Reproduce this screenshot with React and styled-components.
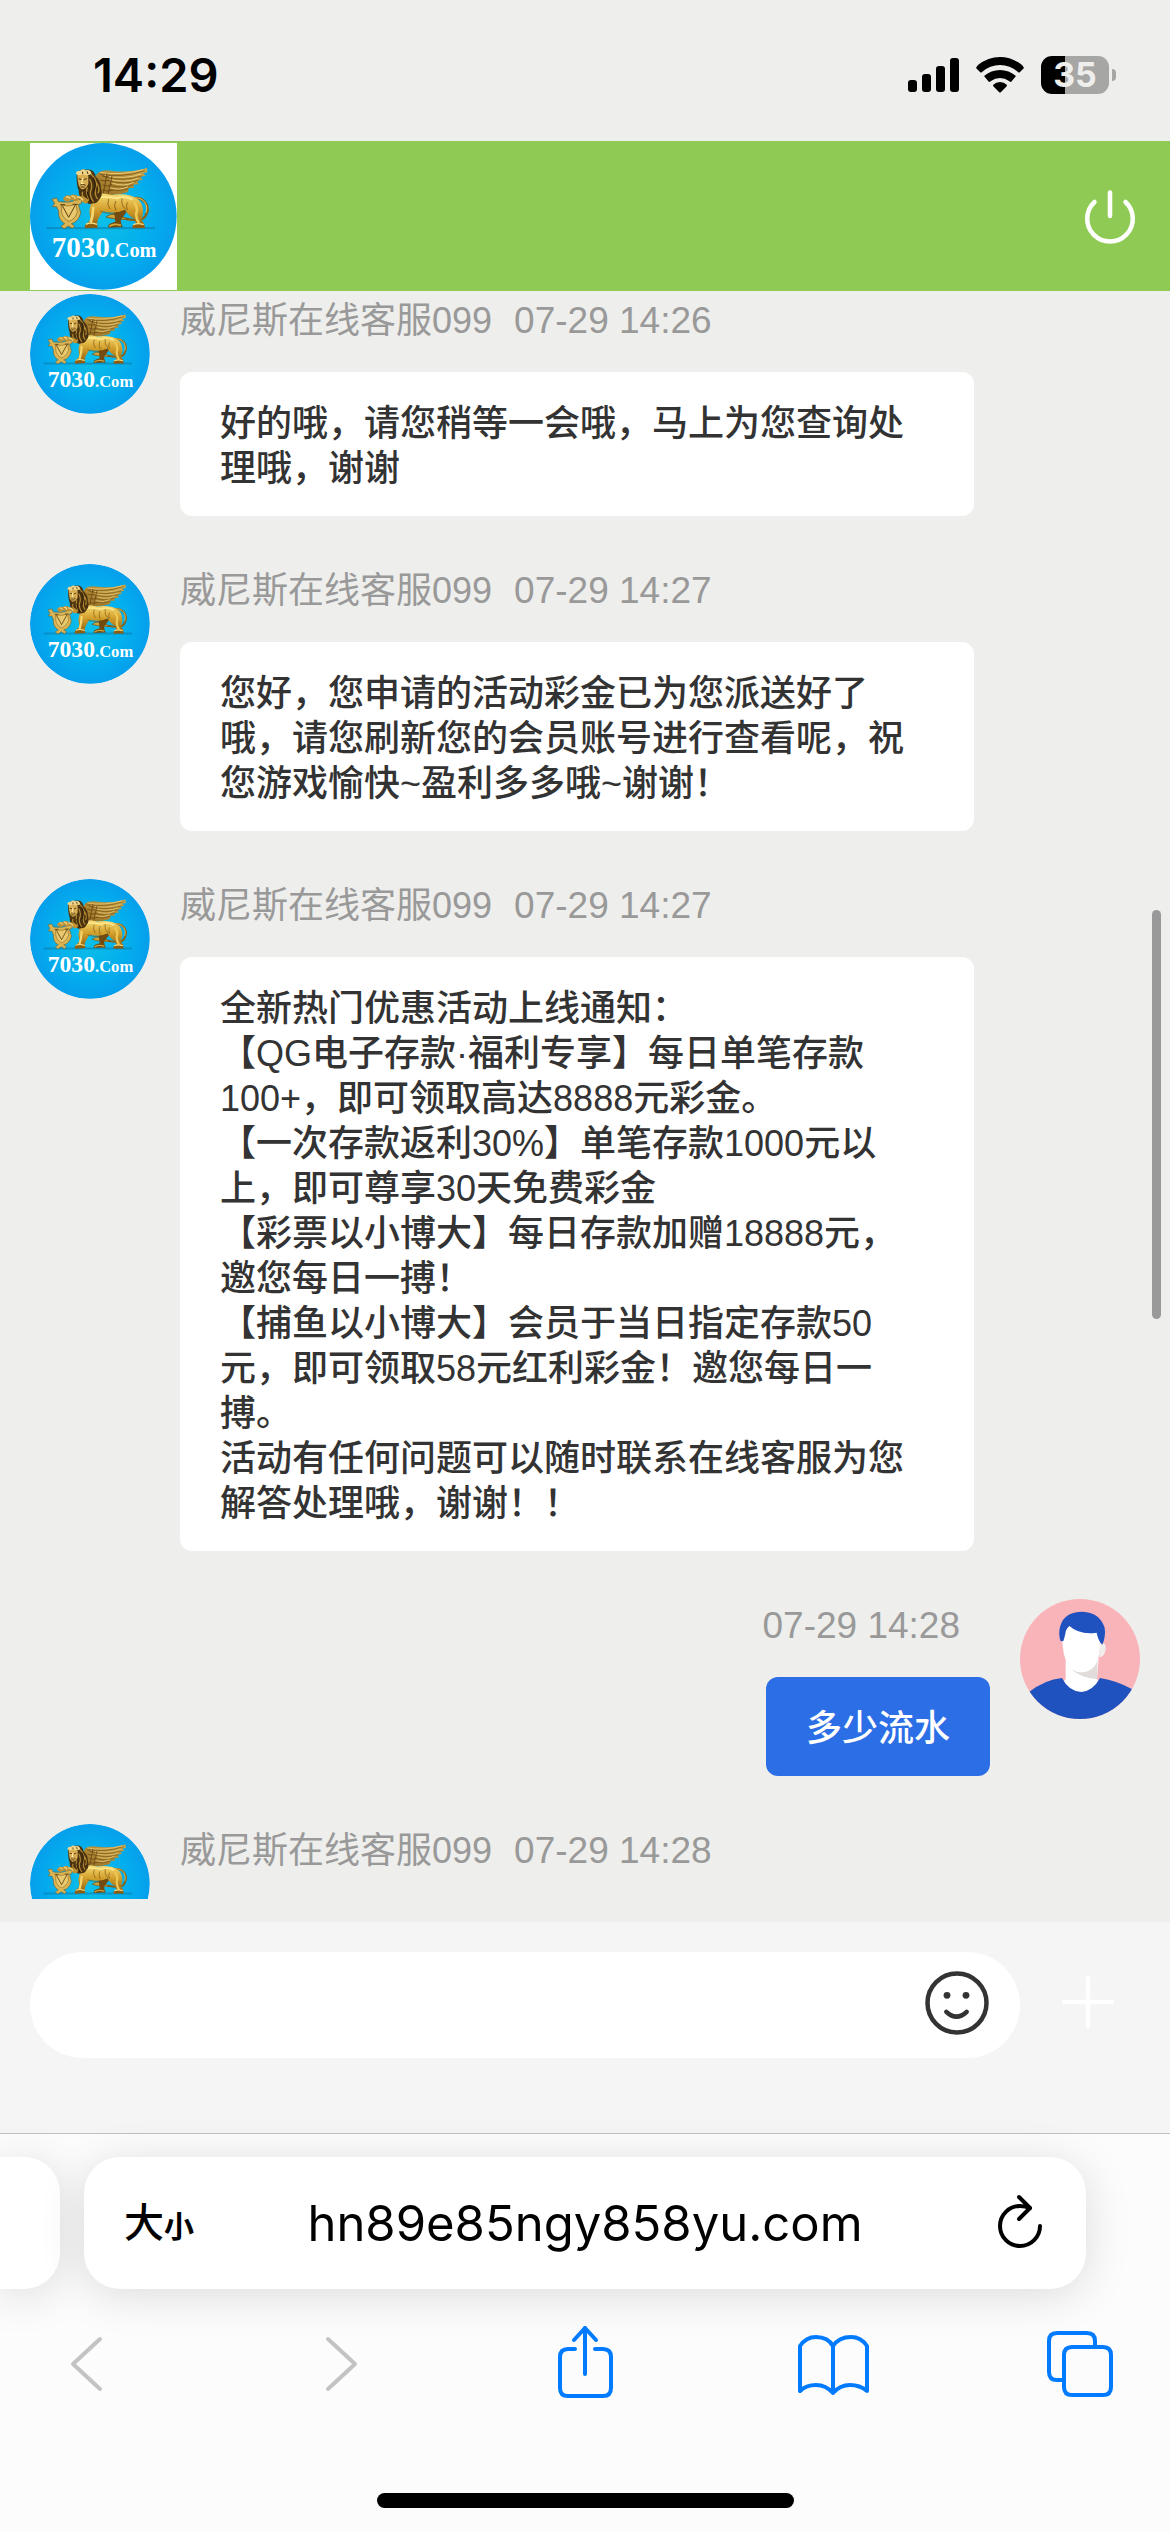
import React, { useId } from "react";
import styled, { createGlobalStyle } from "styled-components";

const GlobalStyle = createGlobalStyle`
  * {
    box-sizing: border-box;
  }
  body {
    margin: 0;
    background: #eeeeec;
    font-family: "Liberation Sans", "Noto Sans CJK SC", sans-serif;
  }
  button,
  input {
    border: 0;
    padding: 0;
    margin: 0;
    background: none;
    font: inherit;
    color: inherit;
  }
  svg {
    display: block;
  }
`;

const Page = styled.div`
  display: flex;
  flex-direction: column;
  height: 100vh;
  overflow: hidden;
  background: #eeeeec;
`;

const StatusBar = styled.div`
  display: flex;
  justify-content: space-between;
  align-items: center;
  height: 141px;
  padding: 8px 54px 0 93px;
  flex: none;
  font-family: Inter, sans-serif;
`;

const Clock = styled.span`
  font-size: 47px;
  font-weight: 600;
  line-height: 60px;
  color: #000;
`;

const StatusIcons = styled.div`
  display: flex;
  align-items: center;
  gap: 17px;
`;

const Battery = styled.div`
  display: flex;
  align-items: center;
  gap: 3px;
`;

const BatteryBody = styled.div`
  width: 68px;
  height: 38px;
  border-radius: 11px;
  background: linear-gradient(to right, #000 24px, #a6a6a4 24px);
  color: #eeeeec;
  font-size: 34px;
  font-weight: 700;
  line-height: 38px;
  text-align: center;
`;

const BatteryTip = styled.div`
  width: 4px;
  height: 12px;
  border-radius: 0 6px 6px 0;
  background: #a6a6a4;
`;

const Header = styled.header`
  display: flex;
  justify-content: space-between;
  align-items: center;
  height: 150px;
  padding: 0 30px;
  flex: none;
  background: #8fcb54;
`;

const HeaderLogo = styled.div`
  width: 147px;
  height: 147px;
  background: #fff;
`;

const IconButton = styled.button`
  flex: none;
  width: ${(p) => p.$size}px;
  height: ${(p) => p.$size}px;
`;

const Chat = styled.main`
  position: relative;
  flex: 1;
  min-height: 0;
  padding-bottom: 23px;
`;

const MessageList = styled.div`
  display: flex;
  flex-direction: column;
  gap: 48px;
  height: 100%;
  padding: 3px 30px 0;
  overflow: hidden;
`;

const ScrollThumb = styled.div`
  position: absolute;
  top: 619px;
  right: 9px;
  width: 9px;
  height: 409px;
  border-radius: 5px;
  background: #999;
`;

const Message = styled.div`
  display: flex;
  flex: none;
  flex-direction: ${(p) => (p.$mine ? "row-reverse" : "row")};
  gap: 30px;
`;

const Avatar = styled.div`
  flex: none;
  width: 120px;
  height: 120px;
  border-radius: 50%;
  overflow: hidden;
`;

const MessageBody = styled.div`
  display: flex;
  flex-direction: column;
  align-items: ${(p) => (p.$mine ? "flex-end" : "flex-start")};
  width: 794px;
`;

const Meta = styled.div`
  display: flex;
  gap: 22px;
  margin-bottom: 24px;
  padding: ${(p) => (p.$mine ? "0 30px 0 0" : "0")};
  color: #999;
  font-size: 36px;
  line-height: 54px;
`;

const Time = styled.span`
  font-size: 37px;
`;

const Bubble = styled.div`
  padding: ${(p) => (p.$mine ? "29px 40px 25px" : "29px 44px 25px 40px")};
  border-radius: 12px;
  background: ${(p) => (p.$mine ? "#2c6ee6" : "#fff")};
  color: ${(p) => (p.$mine ? "#fff" : "#333")};
  font-size: 36px;
  font-weight: 500;
  line-height: 45px;
  white-space: pre-line;
`;

const Composer = styled.form`
  display: flex;
  align-items: flex-start;
  gap: 38px;
  height: 211px;
  padding: 30px 52px 0 30px;
  flex: none;
  background: #f5f5f5;
`;

const InputPill = styled.div`
  display: flex;
  align-items: center;
  flex: 1;
  height: 106px;
  padding: 0 28px 4px 40px;
  border-radius: 53px;
  background: #fff;
`;

const TextInput = styled.input`
  flex: 1;
  min-width: 0;
  height: 90px;
  font-size: 36px;
  outline: none;
`;

const PlusButton = styled(IconButton)`
  margin-top: 20px;
`;

const Browser = styled.footer`
  flex: none;
  border-top: 1px solid #c1c1c1;
  background: #fcfcfc;
`;

const AddressRow = styled.div`
  display: flex;
  gap: 24px;
  padding: 23px 84px 0 0;
`;

const TabCard = styled.div`
  height: 132px;
  background: #fff;
  box-shadow: 0 6px 45px rgba(0, 0, 0, 0.13);
`;

const PreviousTab = styled(TabCard)`
  width: 60px;
  border-radius: 0 36px 36px 0;
`;

const AddressBar = styled(TabCard)`
  display: flex;
  align-items: center;
  flex: 1;
  padding: 0 34px 0 40px;
  border-radius: 36px;
  color: #000;
`;

const TextSizeButton = styled.button`
  display: flex;
  align-items: baseline;
  width: 80px;
  padding-top: 4px;
  font-size: 40px;
  font-weight: 500;
  line-height: 60px;
  small {
    font-size: 30px;
    font-weight: 700;
  }
`;

const Address = styled.input`
  flex: 1;
  min-width: 0;
  height: 80px;
  padding-right: 26px;
  font-family: Inter, sans-serif;
  font-size: 49px;
  text-align: center;
  outline: none;
`;

const Toolbar = styled.nav`
  display: flex;
  justify-content: space-between;
  padding: 35px 50px 0 46px;
`;

const HomeIndicator = styled.div`
  width: 417px;
  height: 15px;
  margin: 89px auto 24px;
  border-radius: 8px;
  background: #000;
`;

// winged lion with the shield, used in the header and as the support avatar
function LionLogo() {
  const id = useId();
  const sky = `${id}sky`;
  const gold = `${id}gold`;
  const wing = `${id}wing`;
  return (
    <svg viewBox="0 0 441 441" width="100%" height="100%">
      <defs>
        <radialGradient id={sky}>
          <stop offset="0" stopColor="#0cc0e8" />
          <stop offset="0.65" stopColor="#03aeed" />
          <stop offset="1" stopColor="#069fec" />
        </radialGradient>
        <linearGradient id={gold} x1="0" y1="0" x2="0" y2="1">
          <stop offset="0" stopColor="#f6da74" />
          <stop offset="0.45" stopColor="#d3a02c" />
          <stop offset="1" stopColor="#8a5a0e" />
        </linearGradient>
        <linearGradient id={wing} x1="1" y1="0" x2="0" y2="1">
          <stop offset="0" stopColor="#cda749" />
          <stop offset="1" stopColor="#956d22" />
        </linearGradient>
      </defs>
      <circle cx="220" cy="220" r="220" fill={`url(#${sky})`} />
      <path d="M50 252H375V259H50Z" fill="#087fb4" opacity="0.6" />

      {/* tail */}
      <path
        d="M308 166C342 160 360 188 350 212C346 224 334 232 318 231C292 231 270 221 240 222"
        fill="none"
        stroke="#8b6214"
        strokeWidth="7"
      />
      <path d="M312 165C341 162 356 186 348 209" fill="none" stroke="#e9c75b" strokeWidth="3" />
      <path d="M228 222Q246 208 262 218Q280 221 294 229Q260 232 228 222Z" fill="#d3a63a" stroke="#65430d" strokeWidth="2" />

      {/* far hind leg */}
      <path d="M250 190L292 204L272 231Q274 247 279 252L236 254Q230 246 245 240L256 236Z" fill="#714b10" />
      <path d="M238 250Q250 240 273 247" fill="none" stroke="#d3a43c" strokeWidth="5" />

      {/* wing */}
      <path
        d="M190 109L204 89Q220 78 242 83Q294 91 351 75L352 88L339 91L347 98L331 102L338 110L322 113L326 124L310 125L312 135L296 135L294 147Q262 159 218 155Q198 142 190 109Z"
        fill={`url(#${wing})`}
      />
      <path
        d="M209 94Q274 106 344 83M226 103Q284 116 335 99M238 114Q288 126 325 112M244 128Q282 137 310 125M243 141Q272 147 295 137"
        fill="none"
        stroke="#6b4b15"
        strokeWidth="2"
      />
      <path
        d="M211 88Q270 99 340 80M224 98Q282 111 334 93M238 109Q284 121 324 106M247 121Q284 132 311 118M240 135Q270 143 294 131"
        fill="none"
        stroke="#e6c974"
        strokeWidth="3"
      />
      <path
        d="M216 98Q229 105 239 98M211 111Q225 118 240 111M218 126Q232 133 246 125M218 141Q233 148 248 140M231 92L220 151M246 99L234 154"
        fill="none"
        stroke="#6b4a16"
        strokeWidth="3"
      />

      {/* body, near hind leg, near fore leg */}
      <path
        d="M188 158Q208 146 246 156Q275 151 303 158Q333 169 337 190Q342 205 337 219Q331 232 342 241L345 255L309 256Q302 247 317 242L316 229Q292 217 286 200Q257 215 219 205L206 225Q198 237 204 254L166 256Q160 248 173 239L181 230L178 203Z"
        fill={`url(#${gold})`}
      />
      <path d="M208 162Q243 161 261 166Q285 156 308 170" fill="none" stroke="#ffe88c" strokeWidth="6" />
      <path d="M190 191Q189 219 182 239" fill="none" stroke="#f5d770" strokeWidth="8" />
      <path d="M312 178Q326 196 318 214Q320 231 327 240" fill="none" stroke="#edc856" strokeWidth="8" />
      <path
        d="M236 168Q229 184 240 198M257 174Q250 188 258 202M276 166Q272 186 287 199M211 205Q250 219 285 202M292 178Q287 190 292 202"
        fill="none"
        stroke="#6d460c"
        strokeWidth="2"
      />
      <path d="M174 251V244M185 251V244M195 251V245M318 252V245M328 252V245M338 252V246" stroke="#6d480d" strokeWidth="2" />
      <path d="M168 244Q181 237 201 244M310 245Q324 239 341 245" fill="none" stroke="#f8df84" strokeWidth="4" />

      {/* mane */}
      <path
        d="M140 92Q150 77 169 80Q192 76 197 101Q213 113 213 137Q220 157 207 170Q202 181 190 181Q174 187 160 171Q145 163 146 142Q139 127 140 92Z"
        fill="#4b330f"
      />
      <path
        d="M184 94Q206 116 196 139Q194 158 203 168M179 108Q190 129 181 147Q181 167 191 176M172 133Q166 151 178 171M158 146Q153 159 168 169M197 115Q212 134 204 151"
        fill="none"
        stroke="#b88c35"
        strokeWidth="4"
      />
      <path d="M190 104Q202 127 190 149M172 146Q172 160 184 177" fill="none" stroke="#1e1405" strokeWidth="3" />
      {/* face */}
      <path d="M142 96Q156 86 175 97L175 123Q167 140 155 139Q143 132 142 96Z" fill="#d9ae52" />
      <path d="M137 92Q140 81 150 84Q158 75 167 82Q182 77 185 94Q169 99 158 94Q147 101 137 92Z" fill="#f0d68a" />
      <path d="M146 108L155 109M161 110L170 107M151 126Q158 121 167 127M152 132H164M158 86V93M171 85L174 93" fill="none" stroke="#493010" strokeWidth="3" />
      <path d="M158 105L155 121L161 122" fill="none" stroke="#ffea9e" strokeWidth="4" />

      {/* shield and the paw over it */}
      <path
        d="M66 169L80 165L85 176Q117 182 144 170L156 169L153 182L145 184L152 210Q145 237 124 242L134 249L127 256L115 249L102 257L93 250L104 242Q84 231 86 204L80 191L67 191L74 181Z"
        fill="#d9b555"
        stroke="#7d5a1e"
        strokeWidth="2"
      />
      <path d="M94 187Q118 192 138 184L142 207Q137 226 118 235Q97 226 95 207Z" fill="#e8c96e" stroke="#8a6420" strokeWidth="2" />
      <path d="M97 188L116 223L136 186M91 185H105M128 184H143" fill="none" stroke="#5d4114" strokeWidth="3" />
      <path d="M99 168Q105 154 120 158Q131 150 145 159Q163 158 177 172Q172 187 158 178L149 168L138 175L126 171L114 176L104 174Z" fill="#c09132" />
      <path d="M108 163Q116 159 120 167M124 160Q132 157 136 167M140 162Q151 160 159 172" fill="none" stroke="#f2d886" strokeWidth="4" />

      <text x="65" y="343" fill="#fff" fontFamily="Liberation Serif, serif" fontWeight="700" fontSize="87">
        7030
        <tspan fontSize="61">.Com</tspan>
      </text>
    </svg>
  );
}

function UserPortrait() {
  return (
    <svg viewBox="0 0 360 360" width="100%" height="100%">
      <path d="M0 0H360V360H0Z" fill="#f9b4b9" />
      <path d="M137 185L236 175L231 241L247 262Q187 315 119 262L137 240Z" fill="#fff" />
      <path d="M240 132Q258 127 257 150Q254 174 237 175Z" fill="#f0edec" />
      <path d="M151 209Q178 226 203 217Q226 207 232 183V240Q187 239 151 209Z" fill="#e1dcda" />
      <path d="M127 85Q183 67 238 95Q244 151 233 181Q215 217 184 217Q150 217 136 181Q124 146 127 85Z" fill="#fff" />
      <path d="M122 127Q114 104 121 80Q134 38 187 38Q239 40 254 86Q258 112 247 137Q235 127 230 101Q180 109 148 81Q137 91 136 104Q133 117 130 126Z" fill="#1f51bf" />
      <path d="M26 280Q74 242 126 237Q146 277 184 279Q219 276 240 237Q291 245 337 271L360 360H0Z" fill="#1f51bf" />
    </svg>
  );
}

function SignalIcon() {
  return (
    <svg width="51" height="34" viewBox="0 0 51 34">
      <rect x="0" y="22" width="9" height="12" rx="3" />
      <rect x="14" y="16" width="9" height="18" rx="3" />
      <rect x="28" y="8" width="9" height="26" rx="3" />
      <rect x="42" y="0" width="9" height="34" rx="3" />
    </svg>
  );
}

function WifiIcon() {
  return (
    <svg width="48" height="36" viewBox="0 0 48 36">
      <path d="M0 11Q1 9 2 8Q12 0 24 0Q36 0 46 8Q47 9 48 11L44 15Q43 16 42 15Q34 8 24 8Q14 8 6 15Q5 16 4 15Z" />
      <path d="M8 19Q15 13 24 13Q33 13 40 19L35 25Q34 25 33 24Q29 21 24 21Q19 21 15 24Q14 25 13 25Z" />
      <path d="M17 28Q20 25 24 25Q28 25 31 28Q31 29 30 30L25 35Q24 36 23 35L18 30Q17 29 17 28Z" />
    </svg>
  );
}

function PowerIcon() {
  return (
    <svg width="60" height="60" viewBox="0 0 60 60" fill="none" stroke="#fff" strokeWidth="4.5" strokeLinecap="round">
      <path d="M30 6.500V30" />
      <path d="M14.500 16A22.800 22.800 0 1 0 45.500 16" />
    </svg>
  );
}

function SmileIcon() {
  return (
    <svg width="70" height="70" viewBox="0 0 70 70" fill="none" stroke="#333" strokeWidth="4.5" strokeLinecap="round">
      <circle cx="35" cy="35" r="29.5" />
      <circle cx="25" cy="27.3" r="3.4" fill="#333" stroke="none" />
      <circle cx="44" cy="27.3" r="3.4" fill="#333" stroke="none" />
      <path d="M24.3 43.8Q34.5 53.5 44.7 43.8" />
    </svg>
  );
}

function PlusIcon() {
  return (
    <svg width="60" height="60" viewBox="0 0 60 60" stroke="#fff" strokeWidth="4.5" strokeLinecap="round">
      <path d="M30 6V54M6 30H54" />
    </svg>
  );
}

function ReloadIcon() {
  return (
    <svg width="60" height="60" viewBox="0 0 60 60" fill="none" stroke="#000" strokeWidth="4" strokeLinecap="round" strokeLinejoin="round">
      <path d="M48 33A20 20 0 1 1 28 13Q33 13 38 15" />
      <path d="M27 4L38 15L27 26" />
    </svg>
  );
}

const ToolSvg = styled.svg.attrs({
  width: 80,
  height: 80,
  viewBox: "0 0 80 80",
  fill: "none",
  strokeLinecap: "round",
  strokeLinejoin: "round",
})`
  stroke: ${(p) => (p.$off ? "#c3c3c3" : "#007aff")};
  stroke-width: 4;
`;

const tools = [
  { label: "后退", off: true, paths: ["M54 15L27 40L54 65"] },
  { label: "前进", off: true, paths: ["M33 15L60 40L33 65"] },
  {
    label: "分享",
    paths: [
      "M42 4V50",
      "M31 16L42 4L53 16",
      "M32 25H25Q17 25 17 33V64Q17 72 25 72H60Q68 72 68 64V33Q68 25 60 25H52",
    ],
  },
  {
    label: "书签",
    paths: [
      "M8 67V22Q14 13 24 13Q36 13 41 22Q47 13 59 13Q69 13 75 22V67Q68 61 58 61Q48 61 41 69Q34 61 24 61Q14 61 8 67Z",
      "M41 22V68",
    ],
  },
  {
    label: "标签页",
    paths: [
      "M24 56H17Q9 56 9 48V17Q9 9 17 9H47Q55 9 55 17V23",
      "M32 23H63Q71 23 71 31V63Q71 71 63 71H32Q24 71 24 63V31Q24 23 32 23Z",
    ],
  },
];

const agent = "威尼斯在线客服099";

const messages = [
  { time: "07-29 14:26", text: "好的哦，请您稍等一会哦，马上为您查询处理哦，谢谢" },
  {
    time: "07-29 14:27",
    text: "您好，您申请的活动彩金已为您派送好了哦，请您刷新您的会员账号进行查看呢，祝您游戏愉快~盈利多多哦~谢谢！",
  },
  {
    time: "07-29 14:27",
    text: `全新热门优惠活动上线通知：
【QG电子存款·福利专享】每日单笔存款100+，即可领取高达8888元彩金。
【一次存款返利30%】单笔存款1000元以上，即可尊享30天免费彩金
【彩票以小博大】每日存款加赠18888元，邀您每日一搏！
【捕鱼以小博大】会员于当日指定存款50元，即可领取58元红利彩金！邀您每日一搏。
活动有任何问题可以随时联系在线客服为您解答处理哦，谢谢！！`,
  },
  { mine: true, time: "07-29 14:28", text: "多少流水" },
  { time: "07-29 14:28" },
];

function App() {
  return (
    <Page lang="zh-CN">
      <GlobalStyle />
      <StatusBar>
        <Clock>14:29</Clock>
        <StatusIcons>
          <SignalIcon />
          <WifiIcon />
          <Battery>
            <BatteryBody>35</BatteryBody>
            <BatteryTip />
          </Battery>
        </StatusIcons>
      </StatusBar>

      <Header>
        <HeaderLogo>
          <LionLogo />
        </HeaderLogo>
        <IconButton $size={60} aria-label="结束会话">
          <PowerIcon />
        </IconButton>
      </Header>

      <Chat>
        <MessageList>
          {messages.map((m, i) => (
            <Message key={i} $mine={m.mine}>
              <Avatar>{m.mine ? <UserPortrait /> : <LionLogo />}</Avatar>
              <MessageBody $mine={m.mine}>
                <Meta $mine={m.mine}>
                  {!m.mine && <span>{agent}</span>}
                  <Time>{m.time}</Time>
                </Meta>
                {m.text && <Bubble $mine={m.mine}>{m.text}</Bubble>}
              </MessageBody>
            </Message>
          ))}
        </MessageList>
        <ScrollThumb />
      </Chat>

      <Composer onSubmit={(e) => e.preventDefault()}>
        <InputPill>
          <TextInput type="text" aria-label="消息" />
          <IconButton type="button" $size={70} aria-label="表情">
            <SmileIcon />
          </IconButton>
        </InputPill>
        <PlusButton type="button" $size={60} aria-label="更多">
          <PlusIcon />
        </PlusButton>
      </Composer>

      <Browser>
        <AddressRow>
          <PreviousTab />
          <AddressBar>
            <TextSizeButton aria-label="大小">
              大<small>小</small>
            </TextSizeButton>
            <Address type="text" aria-label="网址" defaultValue="hn89e85ngy858yu.com" />
            <IconButton $size={60} aria-label="刷新">
              <ReloadIcon />
            </IconButton>
          </AddressBar>
        </AddressRow>
        <Toolbar>
          {tools.map((t) => (
            <IconButton key={t.label} $size={80} disabled={t.off} aria-label={t.label}>
              <ToolSvg $off={t.off}>
                {t.paths.map((d) => (
                  <path key={d} d={d} />
                ))}
              </ToolSvg>
            </IconButton>
          ))}
        </Toolbar>
        <HomeIndicator />
      </Browser>
    </Page>
  );
}

export default App;
